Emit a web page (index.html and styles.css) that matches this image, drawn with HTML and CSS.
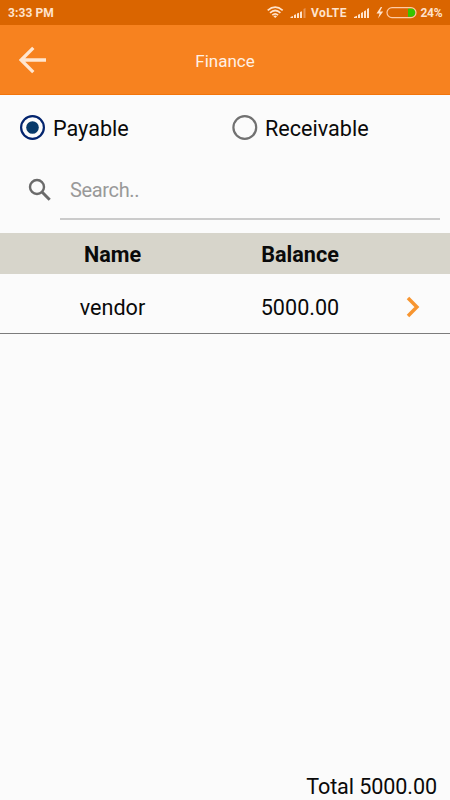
FILE: index.html
```html
<!DOCTYPE html>
<html lang="en">
<head>
<meta charset="utf-8">
<title>Finance</title>
<link rel="stylesheet" href="styles.css">
</head>
<body>
<div class="status">
  <span class="time">3:33 PM</span>
  <svg class="status-icons" width="183" height="25" viewBox="267 0 183 25">
    <g fill="none" stroke="#ffe3cc" stroke-width="1.7">
      <path d="M267.7 10.3Q275.2 3.8 282.7 10.3"/>
      <path d="M270 12.8Q275.2 8.2 280.4 12.8"/>
      <path d="M272.3 15.2Q275.2 12.6 278.1 15.2"/>
    </g>
    <path d="M273.4 16.2Q275.2 15 277 16.2L275.2 18z" fill="#ffe3cc"/>
    <path d="M290.5 18v-1l2.5-1v2zM294 18v-3l2-.8V18zM297 18v-4.5l2-.8V18zM300 18v-6l2-.8V18z" fill="#ffe3cc"/>
    <path d="M303.5 18v-9l2-1v10z" fill="#e99553"/>
    <text class="status-text" x="311" y="17" textLength="35.5">VoLTE</text>
    <path d="M354 18v-1l3-1.3V18zM358 18v-3.2l2-.9V18zM361 18v-5l2-.9V18zM364 18v-6.8l2-.9V18zM367 18V9l2-1v10z" fill="#ffe3cc"/>
    <path d="M380.8 7l-4.3 6.4h3.1L378 18.5l5.2-6.9h-3.3L382.2 7z" fill="#ffe3cc"/>
    <path d="M408 8.4h3.5q4 0 4 4.2t-4 4.2H408z" fill="#35c500"/>
    <rect x="387" y="7.6" width="29" height="10" rx="5" fill="none" stroke="#ffcba5" stroke-width="1.2"/>
    <text class="status-text" x="420.5" y="17" textLength="22">24%</text>
  </svg>
</div>
<header class="bar">
  <svg class="back" width="28" height="28" viewBox="0 0 28 28"><path d="M27 14H2.5M14.3 1.8L2.1 14l12.2 12.2" fill="none" stroke="#ffe6d0" stroke-width="3.3"/></svg>
  <h1>Finance</h1>
</header>
<div class="choices">
  <label class="choice"><svg width="26" height="26" viewBox="0 0 26 26"><circle cx="12.5" cy="12.5" r="11.4" fill="none" stroke="#03246e" stroke-width="2.2"/><circle cx="12.5" cy="12.5" r="6.3" fill="#073969"/></svg><span>Payable</span></label>
  <label class="choice"><svg width="26" height="26" viewBox="0 0 26 26"><circle cx="12.8" cy="12.5" r="11.4" fill="none" stroke="#717171" stroke-width="2.2"/></svg><span>Receivable</span></label>
</div>
<div class="search">
  <svg width="24" height="24" viewBox="0 0 24 24"><circle cx="9" cy="9" r="7" fill="none" stroke="#6b6b6b" stroke-width="2.4"/><path d="M14 14l7.7 7.7" stroke="#6b6b6b" stroke-width="3"/></svg>
  <div class="field">Search..</div>
</div>
<div class="row head"><span>Name</span><span>Balance</span></div>
<div class="row item"><span>vendor</span><span>5000.00</span>
  <svg width="14" height="22" viewBox="0 0 14 22"><path d="M2 2l8.9 9L2 20" fill="none" stroke="#f79530" stroke-width="3.5"/></svg>
</div>
<footer class="total">Total 5000.00</footer>
</body>
</html>
```
FILE: styles.css
```css
* { box-sizing: border-box; }
body {
  margin: 0;
  height: 800px;
  overflow: hidden;
  display: flex;
  flex-direction: column;
  background: #fbfbfb;
  color: #0a0a0a;
  font: 21.6px/26px Roboto, sans-serif;
}
svg { display: block; flex: none; }
.status {
  height: 25px;
  flex: none;
  background: #da6500;
  display: flex;
  justify-content: space-between;
  padding-left: 8px;
}
.time, .status-text {
  font: bold 12px/25px Roboto, sans-serif;
  color: #ffe3cc;
  fill: #ffe3cc;
}
.time { padding-top: 1px; letter-spacing: 0.1px; }
.bar {
  height: 70px;
  flex: none;
  background: #f7821f;
  border-bottom: 1px solid #f3750b;
  display: grid;
  grid-template-columns: 47px 1fr 47px;
  align-items: center;
}
.back { margin-left: 19px; }
.bar h1 {
  margin: 3px 0 0;
  text-align: center;
  font-size: 17px;
  font-weight: 400;
  color: #fff0e4;
}
.choices {
  height: 65px;
  flex: none;
  display: grid;
  grid-template-columns: 212px 1fr;
  align-items: center;
  padding-left: 20px;
}
.choice { display: flex; align-items: center; gap: 7px; }
.choice span { padding-top: 2px; }
.search {
  height: 60px;
  flex: none;
  display: flex;
  align-items: center;
  padding: 0 10px 0 28px;
  gap: 8px;
}
.field {
  flex: 1;
  height: 59px;
  padding-left: 10px;
  border-bottom: 2px solid #cbcbcb;
  color: #999;
  font-size: 20px;
  letter-spacing: -0.35px;
  line-height: 59px;
}
.row {
  display: grid;
  grid-template-columns: 225px 150px 75px;
  align-items: center;
  text-align: center;
  flex: none;
}
.head {
  height: 41px;
  margin-top: 13px;
  background: #d7d5cb;
  font-weight: 700;
  padding-top: 2px;
}
.item {
  height: 60px;
  border-bottom: 1px solid #7c7c7c;
  padding-top: 7px;
}
.item span { padding-top: 2px; }
.item svg { margin-left: 31px; }
.total {
  margin-top: auto;
  padding-right: 13px;
  text-align: right;
  letter-spacing: -0.1px;
}
```
